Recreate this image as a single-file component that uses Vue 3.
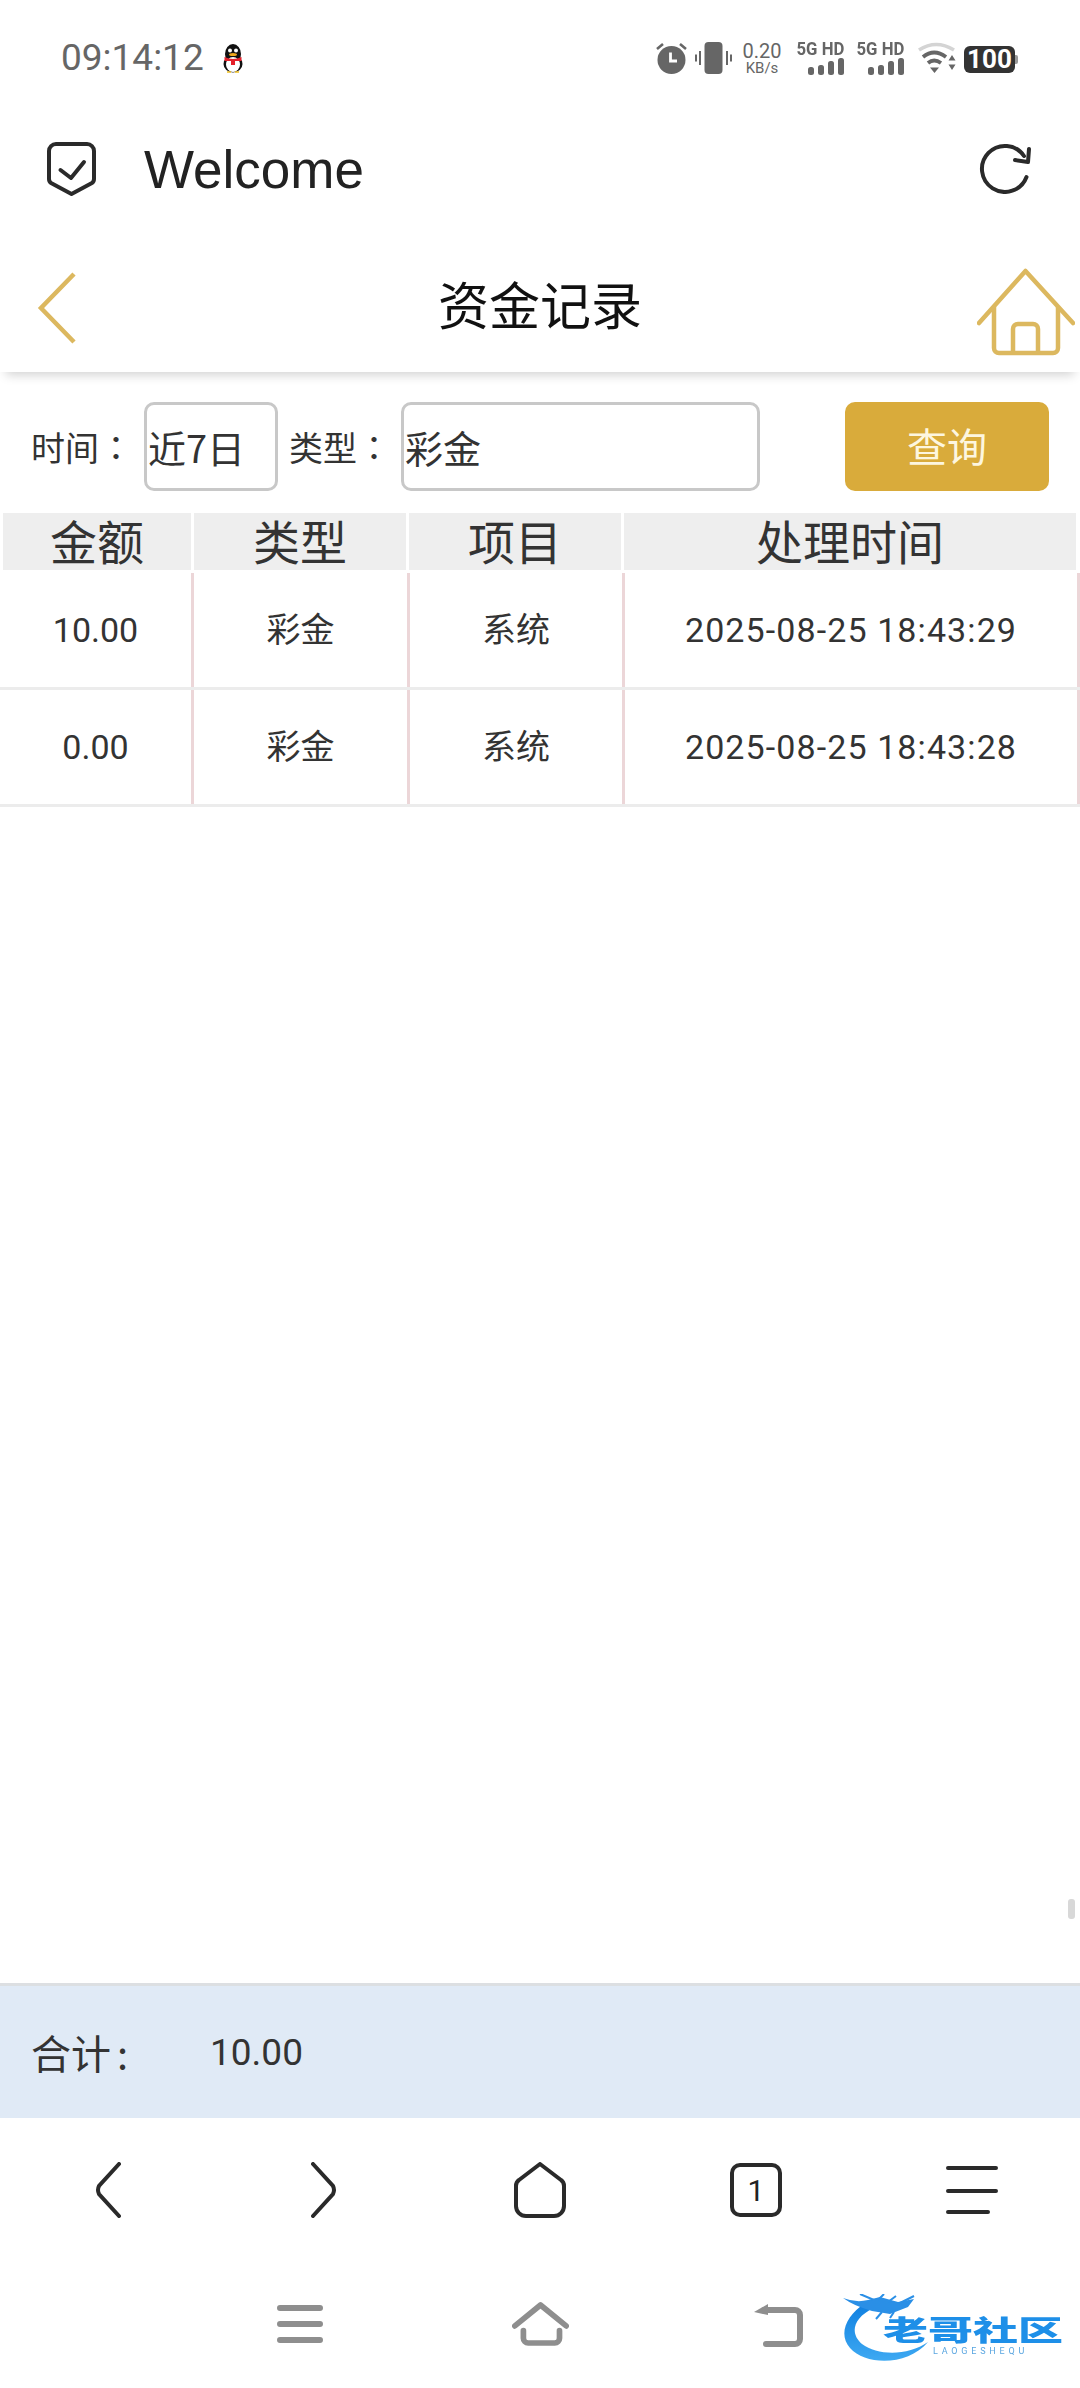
<script setup>
const columns = ['金额', '类型', '项目', '处理时间']
const rows = [
  { amount: '10.00', type: '彩金', item: '系统', time: '2025-08-25 18:43:29' },
  { amount: '0.00', type: '彩金', item: '系统', time: '2025-08-25 18:43:28' },
]
</script>

<template>
  <div class="phone">
    <div class="status">
      <span class="clock">09:14:12</span>
      <svg class="qq" width="24" height="30" viewBox="0 0 24 30">
        <ellipse cx="12" cy="11" rx="8" ry="10" fill="#111" />
        <ellipse cx="12" cy="21" rx="9.500" ry="8.500" fill="#111" />
        <ellipse cx="12" cy="21.500" rx="7" ry="7.500" fill="#fff" />
        <circle cx="9" cy="7.500" r="2" fill="#fff" /><circle cx="15" cy="7.500" r="2" fill="#fff" />
        <ellipse cx="12" cy="11.500" rx="4" ry="1.600" fill="#f0a81c" />
        <path d="M3.500 14 Q12 18 20.500 14 V18 H14 V22 H10 V18 H3.500Z" fill="#e4202a" />
        <path d="M6 29h4M14 29h4" stroke="#f0c020" stroke-width="1.600" />
      </svg>
      <div class="status-right">
        <svg width="31" height="32" viewBox="0 0 31 32" class="i-alarm">
          <circle cx="15.500" cy="18" r="14" fill="#666" />
          <path d="M14.500 10.500v8.500h6.500" fill="none" stroke="#fff" stroke-width="2.800" />
          <path d="M1 7l6-5M30 7l-6-5" stroke="#666" stroke-width="2.600" />
        </svg>
        <svg width="37" height="32" viewBox="0 0 37 32" class="i-vib">
          <rect x="9.500" y="0" width="18" height="32" rx="4" fill="#666" />
          <path d="M5 9v14M1 12.500v7M32 9v14M36 12.500v7" stroke="#666" stroke-width="2" />
        </svg>
        <div class="speed"><span class="speed-a">0.20</span><span class="speed-b">KB/s</span></div>
        <div v-for="n in 2" :key="n" class="sim">
          <span class="sim-label">5G HD</span>
          <svg width="36" height="17" viewBox="0 0 36 17">
            <rect x="0" y="9" width="6" height="8" rx="2.500" fill="#666" />
            <rect x="10" y="7" width="6" height="10" rx="2.500" fill="#666" />
            <rect x="20" y="3" width="6" height="14" rx="2.500" fill="#666" />
            <rect x="30" y="0" width="6" height="17" rx="2.500" fill="#666" />
          </svg>
        </div>
        <svg width="38" height="32" viewBox="0 0 38 32" class="i-wifi">
          <path d="M1 8 Q18 -3 36 8" fill="none" stroke="#d4d4d4" stroke-width="3.600" />
          <path d="M5 15 Q16 6 28 15" fill="none" stroke="#666" stroke-width="3.800" />
          <path d="M10 21 Q16 16 23 21" fill="none" stroke="#666" stroke-width="3.800" />
          <path d="M12 25.500h9l-4.500 5.500z" fill="#666" />
          <path d="M34 13l3.500 5.500h-7zM30.500 22.500h7l-3.500 5.500z" fill="#666" />
        </svg>
        <div class="battery"><span class="battery-num">100</span></div>
      </div>
    </div>

    <div class="toolbar">
      <svg width="49" height="55" viewBox="0 0 49 55" class="shield">
        <path d="M9 2H40a7 7 0 0 1 7 7V37a5 5 0 0 1-2.500 4.300L24.500 52 4.500 41.300A5 5 0 0 1 2 37V9A7 7 0 0 1 9 2Z" fill="none" stroke="#2a2a2a" stroke-width="4" stroke-linejoin="round" />
        <path d="M13.500 28L24 36 37 20" fill="none" stroke="#2a2a2a" stroke-width="4" stroke-linecap="round" stroke-linejoin="round" />
      </svg>
      <span class="welcome">Welcome</span>
      <svg width="52" height="52" viewBox="0 0 52 52" class="refresh">
        <path d="M47.500 35A23 23 0 1 1 45 14" fill="none" stroke="#2a2a2a" stroke-width="4" stroke-linecap="round" />
        <path d="M50 7L49 20 36 18" fill="none" stroke="#2a2a2a" stroke-width="4" stroke-linecap="round" stroke-linejoin="round" />
      </svg>
    </div>

    <header class="header">
      <svg width="40" height="72" viewBox="0 0 40 72" class="back">
        <path d="M37 2L4 36 37 70" fill="none" stroke="#dcb85f" stroke-width="4.500" />
      </svg>
      <h1 class="title">资金记录</h1>
      <svg width="98" height="88" viewBox="0 0 98 88" class="house">
        <path d="M2 55L48.500 3 96 55" fill="none" stroke="#dcb85f" stroke-width="4.500" stroke-linecap="round" stroke-linejoin="round" />
        <path d="M17 39V80a5 5 0 0 0 5 5H76a5 5 0 0 0 5-5V39" fill="none" stroke="#dcb85f" stroke-width="4.500" />
        <path d="M36 85V61a5 5 0 0 1 5-5H56a5 5 0 0 1 5 5V85" fill="none" stroke="#dcb85f" stroke-width="4.500" />
      </svg>
    </header>

    <div class="filter">
      <span class="label">时间<span class="colon">：</span></span>
      <div class="field field-time">近7日</div>
      <span class="label label-type">类型<span class="colon">：</span></span>
      <div class="field field-type">彩金</div>
      <button class="query">查询</button>
    </div>

    <div class="table">
      <div class="thead">
        <div v-for="c in columns" :key="c" class="th">{{ c }}</div>
      </div>
      <div v-for="r in rows" :key="r.time" class="tr">
        <div class="td">{{ r.amount }}</div>
        <div class="td">{{ r.type }}</div>
        <div class="td">{{ r.item }}</div>
        <div class="td td-time">{{ r.time }}</div>
      </div>
    </div>

    <main class="spacer"><i class="scroll-thumb"></i></main>

    <div class="total">
      <span class="total-label">合计<span class="total-colon">:</span></span>
      <span class="total-value">10.00</span>
    </div>

    <nav class="browser">
      <div class="cell"><svg width="26" height="56" viewBox="0 0 26 56"><path d="M24 2L4 24Q2 28 4 32L24 54" fill="none" stroke="#2a2a2a" stroke-width="4" stroke-linecap="round" /></svg></div>
      <div class="cell"><svg width="26" height="56" viewBox="0 0 26 56"><path d="M2 2L22 24Q24 28 22 32L2 54" fill="none" stroke="#2a2a2a" stroke-width="4" stroke-linecap="round" /></svg></div>
      <div class="cell"><svg width="52" height="56" viewBox="0 0 52 56"><path d="M26 2L47 18Q50 20 50 24V44A10 10 0 0 1 40 54H12A10 10 0 0 1 2 44V24Q2 20 5 18Z" fill="none" stroke="#2a2a2a" stroke-width="4" stroke-linejoin="round" /></svg></div>
      <div class="cell"><div class="tabs">1</div></div>
      <div class="cell"><svg width="52" height="56" viewBox="0 0 52 56"><path d="M2 6H50M2 29H50M2 50H42" fill="none" stroke="#2a2a2a" stroke-width="4" stroke-linecap="round" /></svg></div>
    </nav>

    <nav class="system">
      <svg width="46" height="38" viewBox="0 0 46 38" class="sys-menu"><path d="M3 3H43M3 19H43M3 35H43" fill="none" stroke="#8e8e8e" stroke-width="6" stroke-linecap="round" /></svg>
      <svg width="57" height="44" viewBox="0 0 60 46" class="sys-home">
        <path d="M3 25L30 3 57 25" fill="none" stroke="#8e8e8e" stroke-width="6" stroke-linecap="round" stroke-linejoin="round" />
        <path d="M12 30V38a5 5 0 0 0 5 5H45a5 5 0 0 0 5-5V30" fill="none" stroke="#8e8e8e" stroke-width="6" stroke-linecap="round" />
      </svg>
      <svg width="50" height="44" viewBox="0 0 50 44" class="sys-back">
        <path d="M11 7H42a5 5 0 0 1 5 5V36a5 5 0 0 1-5 5H13" fill="none" stroke="#8e8e8e" stroke-width="6" stroke-linecap="round" />
        <path d="M1 9L15 1V12Z" fill="#8e8e8e" />
      </svg>
      <div class="logo">
        <svg width="226" height="76" viewBox="0 0 226 76" class="logo-mark">
          <defs>
            <linearGradient id="lg" x1="0" y1="0" x2="0" y2="1"><stop offset="0" stop-color="#0f7fe0" /><stop offset="1" stop-color="#3ea9f2" /></linearGradient>
          </defs>
          <path d="M27 9C8 22 0 40 12 54 28 72 70 72 90 48 70 62 40 62 24 50 12 40 14 24 36 14Z" fill="url(#lg)" />
          <path d="M5 4Q18 9 30 6L42 3 60 8 76 5 70 13 52 20 34 17Q16 12 5 4Z" fill="#2a8fe6" />
          <path d="M22 0L36 6M40 6L46 0M50 8L58 2M60 10L76 2M44 18L38 25M56 18L52 24" stroke="#2a8fe6" stroke-width="2" fill="none" />
        </svg>
        <span class="logo-cn">老哥社区</span>
        <span class="logo-en">LAOGESHEQU</span>
      </div>
    </nav>
  </div>
</template>

<style>
html, body { margin: 0; background: #fff; }
</style>

<style scoped>
.phone {
  position: relative;
  width: 1080px;
  height: 2388px;
  overflow: hidden;
  display: flex;
  flex-direction: column;
  background: #fff;
  color: #333;
  font-family: Roboto, "Noto Sans CJK SC", sans-serif;
}
.status {
  height: 116px;
  flex: none;
  box-sizing: border-box;
  padding: 41px 65px 0 61px;
  display: flex;
  align-items: flex-start;
  color: #666;
}
.clock { font-size: 37px; line-height: 33px; color: #666; }
.qq { margin-left: 17px; margin-top: 2px; }
.status-right { margin-left: auto; display: flex; align-items: flex-start; }
.i-alarm { margin-top: 1px; }
.i-vib { margin-left: 8px; margin-top: 1px; }
.speed { width: 38px; margin-left: 11px; display: flex; flex-direction: column; align-items: center; }
.speed-a { font-size: 20px; line-height: 20px; }
.speed-b { font-size: 15px; line-height: 14px; }
.sim { width: 49px; margin-left: 14px; display: flex; flex-direction: column; align-items: flex-end; }
.sim-label { font-size: 19px; line-height: 16px; font-weight: 700; white-space: nowrap; transform: scaleX(.88); transform-origin: right; }
.sim svg { margin-top: 1px; }
.sim + .sim { margin-left: 11px; }
.i-wifi { margin-left: 14px; margin-top: 1px; }
.battery {
  margin-left: 8px;
  margin-top: 5px;
  width: 51px;
  height: 27px;
  border-radius: 6px;
  background: #333;
  position: relative;
  display: flex;
  align-items: center;
  justify-content: center;
}
.battery::after {
  content: "";
  position: absolute;
  right: -3px;
  top: 9px;
  width: 3px;
  height: 9px;
  border-radius: 0 2px 2px 0;
  background: #999;
}
.battery-num { font-size: 26px; font-weight: 700; color: #fff; line-height: 27px; }
.toolbar {
  height: 106px;
  flex: none;
  box-sizing: border-box;
  display: flex;
  align-items: center;
  padding: 0 49px 0 47px;
}
.refresh { margin: -2px 0 0 auto; }
.welcome { margin-left: 48px; font-family: "Liberation Sans", sans-serif; font-size: 53px; color: #222; }
.header {
  height: 150px;
  flex: none;
  box-sizing: border-box;
  display: grid;
  grid-template-columns: 1fr auto 1fr;
  align-items: center;
  padding: 0 5px;
  background: #fff;
  box-shadow: 0 9px 10px -6px rgba(0, 0, 0, .18);
}
.title {
  margin: 12px 0 0;
  font-size: 51px;
  font-weight: 400;
  color: #111;
  line-height: 60px;
  font-family: "Noto Sans CJK SC", sans-serif;
}
.back { margin: 22px 0 0 32px; }
.house { margin-top: 29px; justify-self: end; }
.filter {
  margin-top: 30px;
  height: 89px;
  flex: none;
  display: flex;
  align-items: center;
  padding-left: 31px;
  font-family: "Noto Sans CJK SC", sans-serif;
}
.label { width: 113px; font-size: 34px; line-height: 40px; color: #333; white-space: nowrap; }
.colon { font-family: "Noto Sans CJK TC", sans-serif; }
.label-type { margin-left: 11px; width: 112px; }
.field {
  box-sizing: border-box;
  height: 89px;
  border: 3px solid #c8c8c8;
  border-radius: 10px;
  padding-left: 1px;
  font-size: 38px;
  line-height: 50px;
  color: #333;
  display: flex;
  align-items: center;
}
.field-time { width: 134px; }
.field-type { width: 359px; }
.query {
  margin-left: 85px;
  width: 204px;
  height: 89px;
  border: none;
  border-radius: 10px;
  background: #d9ab3b;
  color: #fdf6df;
  font-size: 40px;
  font-family: inherit;
  padding: 0 0 4px;
}
.table { margin-top: 22px; flex: none; }
.thead {
  display: grid;
  grid-template-columns: 188px 212px 212px 452px;
  padding-left: 3px;
  column-gap: 3px;
}
.th {
  height: 57px;
  background: #eeeeee;
  font-size: 47px;
  line-height: 54px;
  text-align: center;
  color: #333;
  font-family: "Noto Sans CJK SC", sans-serif;
}
.tr {
  display: grid;
  grid-template-columns: 194px 216px 215px 455px;
  height: 117px;
  box-sizing: border-box;
  border-bottom: 3px solid #ececec;
}
.thead + .tr { margin-top: 3px; }
.td {
  border-right: 3px solid #ecd6d8;
  font-size: 34px;
  line-height: 50px;
  color: #333;
  display: flex;
  align-items: center;
  justify-content: center;
}
.td-time { letter-spacing: 1.100px; }
.spacer { flex: 1; position: relative; }
.scroll-thumb {
  position: absolute;
  right: 5px;
  top: 1092px;
  width: 7px;
  height: 20px;
  border-radius: 3px;
  background: #d8d8d8;
}
.total {
  height: 135px;
  flex: none;
  box-sizing: border-box;
  background: #e0eaf6;
  border-top: 3px solid #dcdfe2;
  display: flex;
  align-items: center;
  padding-left: 31px;
}
.total-label { font-size: 40px; width: 179px; font-family: "Noto Sans CJK SC", sans-serif; }
.total-colon { margin-left: 6px; }
.total-value { font-size: 37px; }
.browser {
  height: 142px;
  flex: none;
  box-sizing: border-box;
  padding: 40px 0 38px;
  display: grid;
  grid-template-columns: repeat(5, 1fr);
}
.cell { display: flex; align-items: center; justify-content: center; }
.tabs {
  box-sizing: border-box;
  width: 52px;
  height: 54px;
  border: 4px solid #2a2a2a;
  border-radius: 10px;
  font-size: 30px;
  color: #222;
  display: flex;
  align-items: center;
  justify-content: center;
}
.system {
  flex: none;
  height: 128px;
  position: relative;
  display: flex;
  align-items: flex-start;
}
.sys-menu { margin-left: 277px; margin-top: 45px; }
.sys-home { margin-left: 189px; margin-top: 42px; }
.sys-back { margin-left: 184px; margin-top: 43px; }
.logo { position: absolute; left: 838px; top: 34px; width: 226px; height: 76px; filter: blur(.5px); }
.logo-mark { position: absolute; left: 0; top: 0; }
.logo-cn {
  position: absolute;
  left: 45px;
  top: 20px;
  font-family: "Noto Sans CJK SC", sans-serif;
  font-size: 45px;
  font-weight: 900;
  line-height: 30px;
  color: #1e8fe8;
  white-space: nowrap;
  transform: scaleY(.62);
}
.logo-en {
  position: absolute;
  left: 95px;
  top: 53px;
  font-size: 9px;
  line-height: 9px;
  letter-spacing: 3.800px;
  color: #5aa6e0;
  white-space: nowrap;
}
</style>
